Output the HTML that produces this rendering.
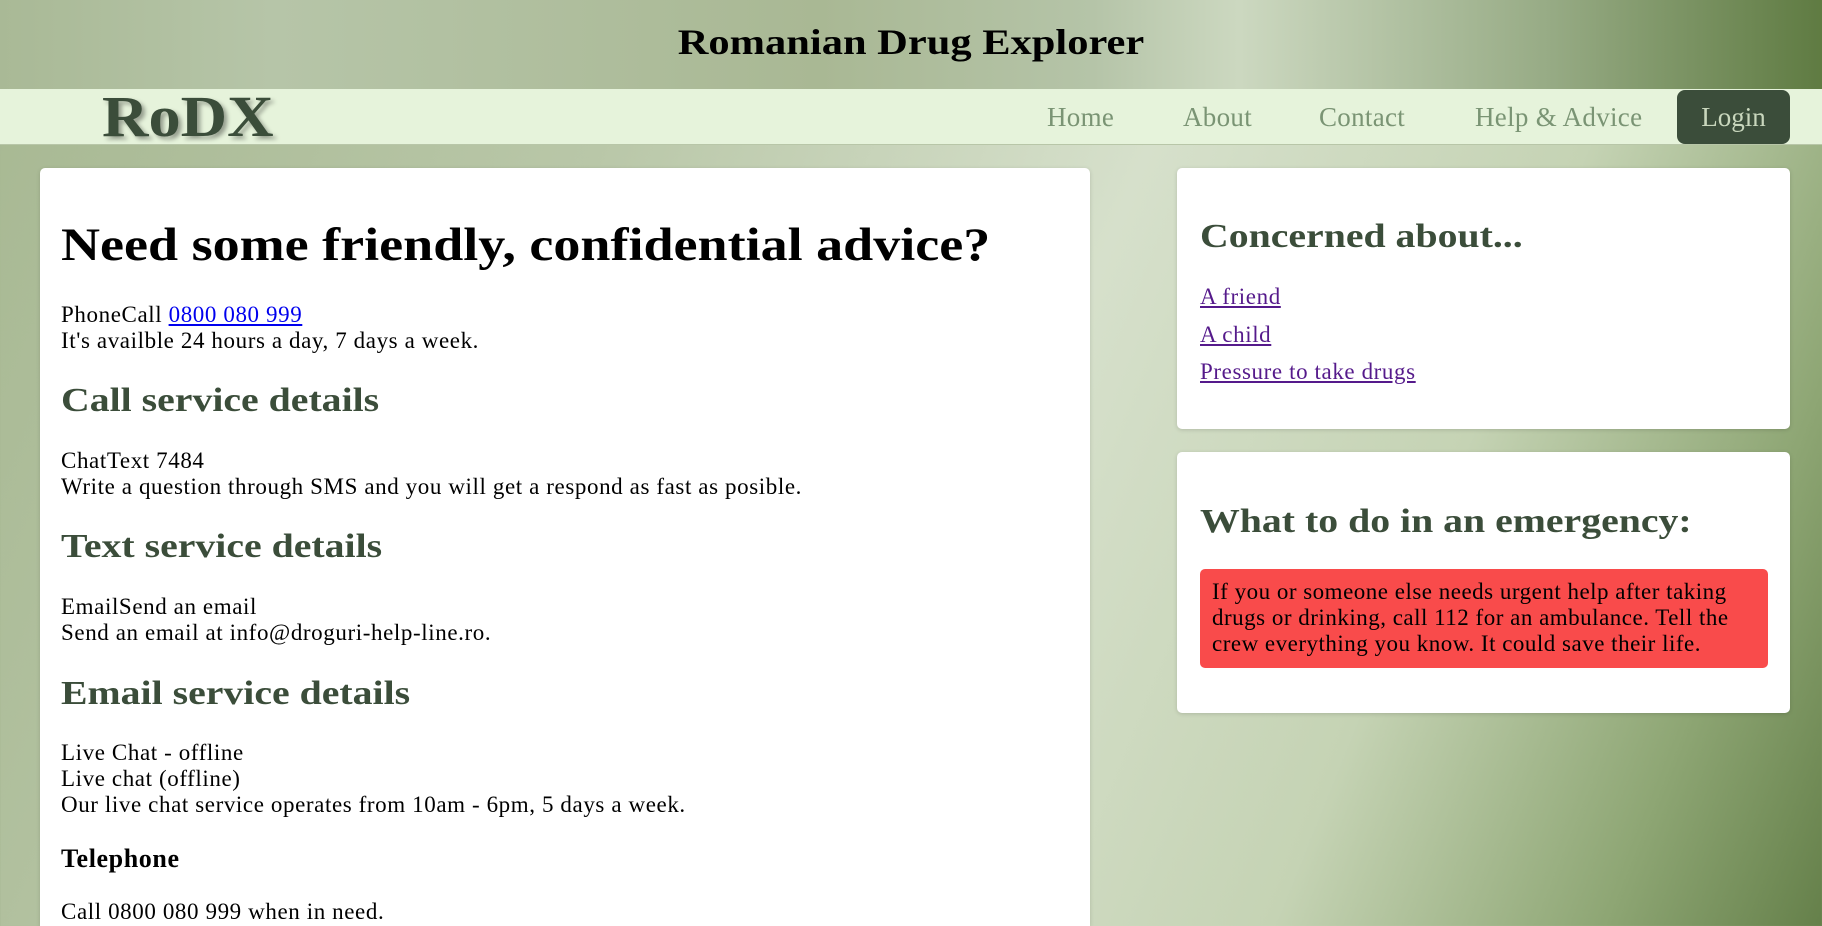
<!DOCTYPE html>
<html><head><meta charset="utf-8"><style>
*{margin:0;padding:0;box-sizing:border-box}
html{width:1822px;height:926px;overflow:hidden}
body{width:1822px;height:926px;overflow:hidden;position:relative;font-family:"Liberation Serif",serif;
background:linear-gradient(112deg,#a7b892 0%,#b9c7a8 30%,#d6e0cb 55%,#c5d3b4 75%,#8ea674 90%,#65804a 100%);}
.topbar{position:absolute;left:0;top:0;width:1822px;height:89px;
background:linear-gradient(90deg,#a9b996 0%,#b6c5a8 15%,#a9b894 45%,#b5c4a8 60%,#ccd8c0 68%,#97ab85 85%,#5f7b42 100%);}
.title{position:absolute;left:0;width:1822px;top:20px;text-align:center;font-size:36px;font-weight:bold;color:#000;line-height:44px;transform:scaleX(1.18)}
.nav{position:absolute;left:0;top:89px;width:1822px;height:56px;background:#e6f3db;border-bottom:1px solid #b8c6a8}
.logo{position:absolute;left:102px;top:0;font-size:58px;font-weight:bold;color:#3b4d3a;line-height:56px;text-shadow:3px 3px 4px rgba(0,0,0,.35);transform:scaleX(1.11);transform-origin:left}
.nl{position:absolute;top:0;line-height:56px;font-size:27px;color:#7a9474;letter-spacing:.3px}
.login{position:absolute;left:1677px;top:1px;width:113px;height:54px;background:#3b4d3a;border-radius:8px;color:#c9d7bd;font-size:27px;line-height:54px;text-align:center}
.card{position:absolute;background:#fff;border-radius:5px;box-shadow:0 1px 4px rgba(0,0,0,.15)}
.t{position:absolute;white-space:nowrap;font-size:23px;line-height:26px;color:#000;letter-spacing:.6px}
.h1{position:absolute;font-size:47px;font-weight:bold;line-height:56px;white-space:nowrap;transform:scaleX(1.15);transform-origin:left}
.h2{position:absolute;font-size:34px;font-weight:bold;line-height:40px;color:#3b4d3a;white-space:nowrap;transform:scaleX(1.17);transform-origin:left}
a{color:#0000ee}
.v{color:#551a8b}
.red{position:absolute;left:1200px;top:569px;width:568px;height:99px;background:#f94b4b;border-radius:5px;padding:10px 12px;font-size:23px;line-height:26px;letter-spacing:.5px;white-space:nowrap}
</style></head><body>
<div class="topbar"></div>
<div class="title">Romanian Drug Explorer</div>
<div class="nav">
<div class="logo">RoDX</div>
<div class="nl" style="left:1047px">Home</div>
<div class="nl" style="left:1183px">About</div>
<div class="nl" style="left:1319px">Contact</div>
<div class="nl" style="left:1475px">Help &amp; Advice</div>
<div class="login">Login</div>
</div>
<div class="card" style="left:40px;top:168px;width:1050px;height:758px;border-bottom-left-radius:0;border-bottom-right-radius:0"></div>
<div class="h1" style="left:61px;top:217px">Need some friendly, confidential advice?</div>
<div class="t" style="left:61px;top:302px">PhoneCall <a href="#">0800 080 999</a></div>
<div class="t" style="left:61px;top:328px">It's availble 24 hours a day, 7 days a week.</div>
<div class="h2" style="left:61px;top:381px">Call service details</div>
<div class="t" style="left:61px;top:448px">ChatText 7484</div>
<div class="t" style="left:61px;top:474px">Write a question through SMS and you will get a respond as fast as posible.</div>
<div class="h2" style="left:61px;top:527px">Text service details</div>
<div class="t" style="left:61px;top:594px">EmailSend an email</div>
<div class="t" style="left:61px;top:620px">Send an email at info@droguri-help-line.ro.</div>
<div class="h2" style="left:61px;top:674px">Email service details</div>
<div class="t" style="left:61px;top:740px">Live Chat - offline</div>
<div class="t" style="left:61px;top:766px">Live chat (offline)</div>
<div class="t" style="left:61px;top:792px">Our live chat service operates from 10am - 6pm, 5 days a week.</div>
<div class="t" style="left:61px;top:844px;font-weight:bold;font-size:26px;line-height:30px">Telephone</div>
<div class="t" style="left:61px;top:899px">Call 0800 080 999 when in need.</div>

<div class="card" style="left:1177px;top:168px;width:613px;height:261px"></div>
<div class="h2" style="left:1200px;top:217px">Concerned about...</div>
<div class="t" style="left:1200px;top:284px"><a class="v" href="#">A friend</a></div>
<div class="t" style="left:1200px;top:322px"><a class="v" href="#">A child</a></div>
<div class="t" style="left:1200px;top:359px"><a class="v" href="#">Pressure to take drugs</a></div>

<div class="card" style="left:1177px;top:452px;width:613px;height:261px"></div>
<div class="h2" style="left:1200px;top:502px">What to do in an emergency:</div>
<div class="red">If you or someone else needs urgent help after taking<br>drugs or drinking, call 112 for an ambulance. Tell the<br>crew everything you know. It could save their life.</div>
</body></html>
